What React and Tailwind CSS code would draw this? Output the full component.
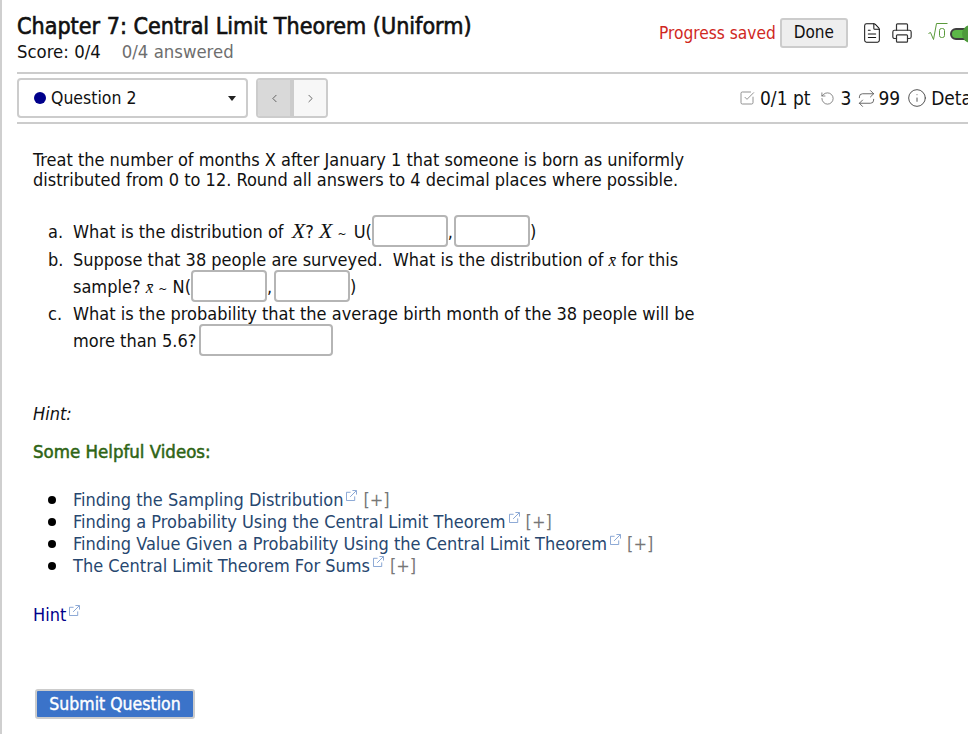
import React from 'react';
import { FileText, Printer, ChevronLeft, ChevronRight, SquareCheckBig, RotateCcw, Repeat, Info } from 'lucide-react';

function Ext() {
  return (
    <svg width="11" height="11" viewBox="0 0 12 12" fill="none" stroke="currentColor" strokeWidth="1" className="inline-block align-[5px] ml-[3px] text-[#7f9fd0]">
      <path d="M5 2.5H.5v9h9V7" />
      <path d="M4.5 7.5l6.5-6.5M7 .5h4.5V5" />
    </svg>
  );
}

function Blank({ w }) {
  return <span className={`inline-block align-middle -my-[4px] -translate-y-[2px] h-[32px] bg-white border-2 border-[#b5b5b5] rounded-[4px] ${w}`} />;
}

function MathVar({ children }) {
  return <i className="font-['Liberation_Serif',serif] text-[22px] leading-[0]">{children}</i>;
}

function MathBar() {
  return <i className="font-['Liberation_Serif',serif] text-[17px] leading-[0]">x̄</i>;
}

function Tilde({ className = '' }) {
  return <span className={`text-[12px] leading-[0] ${className}`}>~</span>;
}

const videos = [
  'Finding the Sampling Distribution',
  'Finding a Probability Using the Central Limit Theorem',
  'Finding Value Given a Probability Using the Central Limit Theorem',
  'The Central Limit Theorem For Sums',
];

export default function App() {
  return (
    <div className="h-[734px] w-[968px] overflow-hidden bg-white border-l-2 border-[#cfcfcf] text-[#111] font-['DejaVu_Sans_Condensed','DejaVu_Sans',sans-serif] text-[18px]">
      <div className="pl-[15px]">
        {/* header */}
        <div className="flex justify-between h-[74px] pt-[12px] border-b-2 border-[#cccccc]">
          <div>
            <h1 className="text-[23.1px] leading-[29px] [-webkit-text-stroke:0.6px_#111]">Chapter 7: Central Limit Theorem (Uniform)</h1>
            <div className="leading-[22px] text-[18.4px]">
              Score: 0/4<span className="ml-[21px] text-[#6e6e6e]">0/4 answered</span>
            </div>
          </div>
          <div className="flex items-start w-[309px] shrink-0 pt-[6px]">
            <span className="text-[#d0281e] text-[17.2px] leading-[30px] whitespace-nowrap">Progress saved</span>
            <button className="ml-[4px] h-[30px] w-[68px] shrink-0 rounded-[3px] bg-[#eeeeee] border-2 border-[#cccccc] text-[17px]">Done</button>
            <FileText size={22} strokeWidth={1.1} className="ml-[13px] mt-[4px] shrink-0" />
            <Printer size={22} strokeWidth={1.3} className="ml-[8px] mt-[4px] shrink-0 text-[#333]" />
            <svg width="20" height="18" viewBox="0 0 20 18" fill="none" stroke="#5a9a3a" strokeWidth="1" className="ml-[15px] mt-[5px] shrink-0">
              <path d="M.5 10.5l2-1 3 7 3-16h11" />
              <rect x="11.5" y="5.5" width="5" height="9" rx="2" />
            </svg>
            <span className="relative ml-[2px] mt-[10px] h-[12px] w-[30px] rounded-full bg-[#5cb848] border-2 border-[#3f3f3f] shrink-0">
              <span className="absolute left-[10px] -top-[5px] h-[18px] w-[18px] rounded-full bg-[#4e9a3c]" />
            </span>
          </div>
        </div>

        {/* question bar */}
        <div className="flex justify-between items-center h-[50px] border-b-2 border-[#cccccc]">
          <div className="flex items-center">
            <div className="flex items-center w-[231px] h-[40px] border-2 border-[#cccccc] rounded-[4px] pl-[15px] pr-[10px] text-[17.5px]">
              <span className="w-[12px] h-[12px] rounded-full bg-[#00008b] mr-[5px]" />
              <span>Question 2</span>
              <span className="ml-auto w-0 h-0 border-x-[4px] border-x-transparent border-t-[5px] border-t-[#222]" />
            </div>
            <div className="flex ml-[8px] h-[40px] w-[72px] border-2 border-[#cccccc] rounded-[4px] overflow-hidden">
              <span className="flex-1 flex items-center justify-center bg-[#d9d9d9] border-r-[4px] border-[#cccccc]">
                <ChevronLeft size={13} strokeWidth={1.2} className="text-[#222]" />
              </span>
              <span className="flex-1 flex items-center justify-center bg-[#f7f7f7]">
                <ChevronRight size={13} strokeWidth={1.2} className="text-[#222]" />
              </span>
            </div>
          </div>
          <div className="flex items-center w-[229px] shrink-0 whitespace-nowrap overflow-hidden text-[19px]">
            <SquareCheckBig size={16} strokeWidth={1.2} className="text-[#777] mr-[5px] shrink-0" />
            <span>0/1 pt</span>
            <RotateCcw size={15} strokeWidth={1.1} className="ml-[9px] mr-[6px] text-[#555] shrink-0" />
            <span>3</span>
            <Repeat size={19} strokeWidth={1.1} className="ml-[6px] mr-[2px] text-[#555] shrink-0" />
            <span>99</span>
            <Info size={20} strokeWidth={1.1} className="ml-[7px] mr-[4px] text-[#444] shrink-0" />
            <span>Details</span>
          </div>
        </div>

        {/* question body */}
        <div className="pl-[16px]">
          <p className="mt-[26px] leading-[20px]">
            Treat the number of months X after January 1 that someone is born as uniformly<br />
            distributed from 0 to 12. Round all answers to 4 decimal places where possible.
          </p>

          <ol className="mt-[28px] w-[680px] leading-[27px]">
            <li className="flex">
              <span className="w-[40px] pl-[15px] shrink-0">a.</span>
              <span className="whitespace-nowrap">
                What is the distribution of <span className="ml-[3px]"><MathVar>X</MathVar></span>? <MathVar>X</MathVar> <Tilde className="mr-[2px]" /> U(<Blank w="w-[76px]" /><span className="mr-px">,</span><Blank w="w-[76px]" />)
              </span>
            </li>
            <li className="flex mt-px">
              <span className="w-[40px] pl-[15px] shrink-0">b.</span>
              <span className="whitespace-nowrap">
                Suppose that 38 people are surveyed.&nbsp; What is the distribution of <MathBar /> for this<br />
                sample? <MathBar /> <Tilde /> N(<Blank w="w-[76px]" /><span className="mr-[2px]">,</span><Blank w="w-[76px]" />)
              </span>
            </li>
            <li className="flex">
              <span className="w-[40px] pl-[15px] shrink-0">c.</span>
              <span className="whitespace-nowrap">
                What is the probability that the average birth month of the 38 people will be<br />
                more than 5.6? <Blank w="w-[134px] -ml-[2px]" />
              </span>
            </li>
          </ol>

          <p className="mt-[48px] italic leading-[24px]">Hint:</p>
          <p className="mt-[14px] text-[#2e6414] text-[18.5px] leading-[24px] [-webkit-text-stroke:0.5px_#2e6414]">Some Helpful Videos:</p>

          <ul className="mt-[25px] leading-[22px]">
            {videos.map((v) => (
              <li key={v} className="flex items-center text-[#27476f]">
                <span className="ml-[15px] mr-[17px] h-[8px] w-[8px] rounded-full bg-black shrink-0" />
                <span>
                  {v}<Ext />
                  <span className="ml-[6px] text-[#777]">[+]</span>
                </span>
              </li>
            ))}
          </ul>

          <p className="mt-[26px] leading-[24px] text-[#00008b]">Hint<Ext /></p>

          <button className="mt-[62px] ml-[2px] h-[30px] w-[160px] rounded-[3px] bg-[#3b73c9] border-2 border-[#cccccc] text-white text-[17.5px] [-webkit-text-stroke:0.4px_#fff]">
            Submit Question
          </button>
        </div>
      </div>
    </div>
  );
}
